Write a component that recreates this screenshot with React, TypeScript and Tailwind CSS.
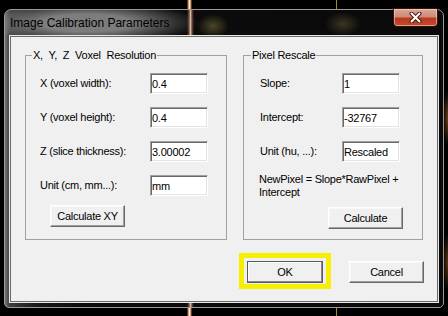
import React from "react";

function Btn({ children, className }: { children: React.ReactNode; className: string }) {
  return (
    <button
      className={
        "flex items-center justify-center bg-[#f0f0f0] text-black border border-t-white border-l-white border-b-[#696969] border-r-[#696969] shadow-[inset_-1px_-1px_0_#a0a0a0,inset_1px_1px_0_#f8f8f8] " +
        className
      }
    >
      {children}
    </button>
  );
}

function Row({ label, value, labelClass, className }: { label: string; value: string; labelClass: string; className: string }) {
  return (
    <div className={"flex items-center h-[21px] " + className}>
      <span className={labelClass}>{label}</span>
      <input
        readOnly
        value={value}
        className="w-[58px] h-[21px] bg-white text-black pl-[1px] outline-none border border-t-[#a0a0a0] border-l-[#a0a0a0] border-b-white border-r-white shadow-[inset_1px_1px_0_#696969,inset_-1px_-1px_0_#e3e3e3] font-['Liberation_Sans',Arial,sans-serif] text-[11px] tracking-[-0.25px] leading-[13px]"
      />
    </div>
  );
}

export default function App() {
  return (
    <div className="relative w-[448px] h-[316px] overflow-hidden bg-black bg-[linear-gradient(to_right,transparent_187px,#b07040_188px,#fff0e0_189.5px,#c07040_191px,transparent_192px),linear-gradient(to_right,transparent_335.5px,#a09020_336px,#a09020_336.8px,transparent_337.3px),radial-gradient(ellipse_5px_28px_at_448px_118px,rgba(160,90,30,0.7),transparent),radial-gradient(ellipse_5px_30px_at_448px_262px,rgba(160,90,30,0.6),transparent)] pt-[9px] pl-[4px] font-['Liberation_Sans',Arial,sans-serif]">
      <div className="w-[440px] h-[299px] flex flex-col rounded-t-[7px] rounded-b-[5px] border border-[#9a9a9a] bg-[#0b0b0b] bg-[linear-gradient(to_right,transparent_182px,rgba(200,120,70,0.55)_184px,rgba(255,235,215,0.8)_185.5px,rgba(200,110,60,0.55)_187px,transparent_189px),linear-gradient(to_right,#727272,#3c3c3c_5px,#1a1a1a_30px,#0c0c0c_80px,#0a0a0a)]">
        {/* title bar */}
        <div className="h-[25px] flex items-start pl-[5px] bg-[radial-gradient(ellipse_112px_22px_at_82px_13px,rgba(145,145,145,0.85)_40%,rgba(140,140,140,0)),radial-gradient(ellipse_16px_12px_at_208px_16px,rgba(130,120,60,0.55),transparent),radial-gradient(ellipse_18px_12px_at_338px_14px,rgba(120,110,60,0.45),transparent)] rounded-t-[6px]">
          <span className="pt-[6px] text-[12px] leading-[14px] text-black">Image Calibration Parameters</span>
          <div className="ml-auto mr-[5px] mt-[-2px] w-[45px] h-[19px] rounded-b-[4px] border border-[#3a1208] bg-[linear-gradient(to_bottom,#d9a89c,#d08a78_45%,#b83a20_55%,#c54a2a)] shadow-[inset_0_0_0_1px_rgba(255,220,210,0.55)] flex items-center justify-center">
            <svg width="13" height="11" viewBox="0 0 13 11">
              <path d="M2.5 1.5 L10.5 9.5 M10.5 1.5 L2.5 9.5" stroke="#4a1a10" strokeWidth="4" strokeLinecap="round" />
              <path d="M2.5 1.5 L10.5 9.5 M10.5 1.5 L2.5 9.5" stroke="#ffffff" strokeWidth="2" strokeLinecap="round" />
            </svg>
          </div>
        </div>
        {/* client */}
        <div className="ml-[4px] w-[430px] h-[268px] bg-[#f0f0f0] border border-[#e8e8e8] shadow-[inset_0_0_0_1px_#6a6a6a] text-[11px] tracking-[-0.25px] text-black">
          <div className="flex pt-[12px] pl-[15px] gap-[16px]">
            <fieldset className="w-[202px] h-[192px] border border-[#a0a0a0] pl-[6px]">
              <legend className="px-[1px] leading-[14px] [word-spacing:3px]">X, Y, Z Voxel Resolution</legend>
              <div className="flex flex-col gap-[13px] pt-[11px]">
                <Row label="X (voxel width):" value="0.4" labelClass="w-[110px]" className="pl-[8px]" />
                <Row label="Y (voxel height):" value="0.4" labelClass="w-[110px]" className="pl-[8px]" />
                <Row label="Z (slice thickness):" value="3.00002" labelClass="w-[110px]" className="pl-[8px]" />
                <Row label="Unit (cm, mm...):" value="mm" labelClass="w-[110px]" className="pl-[8px]" />
              </div>
              <Btn className="ml-[18px] mt-[9px] w-[75px] h-[22px]">Calculate XY</Btn>
            </fieldset>
            <fieldset className="w-[180px] h-[192px] border border-[#a0a0a0] pl-[7px]">
              <legend className="px-[1px] leading-[14px]">Pixel Rescale</legend>
              <div className="flex flex-col gap-[13px] pt-[11px]">
                <Row label="Slope:" value="1" labelClass="w-[82px]" className="pl-[9px]" />
                <Row label="Intercept:" value="-32767" labelClass="w-[82px]" className="pl-[9px]" />
                <Row label="Unit (hu, ...):" value="Rescaled" labelClass="w-[82px]" className="pl-[9px]" />
              </div>
              <p className="pl-[8px] mt-[11px] leading-[13px]">
                NewPixel = Slope*RawPixel +<br />Intercept
              </p>
              <Btn className="ml-[77px] mt-[8px] w-[75px] h-[22px]">Calculate</Btn>
            </fieldset>
          </div>
          <div className="flex items-start mt-[13px] pl-[229px]">
            <div className="w-[92px] h-[36px] border-[5px] border-[#f6f000] pl-[3px] pt-[3px]">
              <button className="w-[76px] h-[22px] flex items-center justify-center bg-[#f0f0f0] border border-[#5a5a5a] shadow-[inset_-1px_-1px_0_#8a8a8a,inset_1px_1px_0_#ffffff]">
                OK
              </button>
            </div>
            <Btn className="ml-[18px] mt-[8px] w-[75px] h-[22px]">Cancel</Btn>
          </div>
        </div>
      </div>
    </div>
  );
}
